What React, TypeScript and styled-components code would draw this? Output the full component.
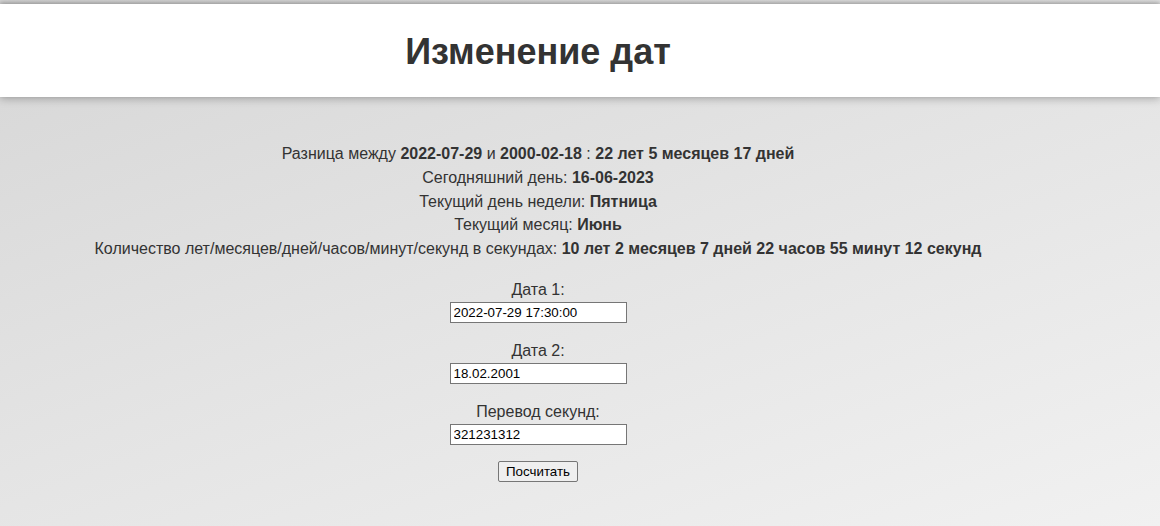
import React from "react";
import styled, { createGlobalStyle } from "styled-components";

const Global = createGlobalStyle`
  html, body { margin: 0; padding: 0; }
  body {
    min-height: 526px;
    background: linear-gradient(160deg, #d6d6d6 0%, #e4e4e4 50%, #f1f1f1 100%);
    font-family: "Liberation Sans", Arial, sans-serif;
    color: #333;
    overflow: hidden;
  }
`;

const Page = styled.div`
  width: 1076px;
  padding-top: 4px;
`;

const Header = styled.header`
  width: 1160px;
  height: 93px;
  background: #fff;
  box-shadow: 0 2px 8px rgba(0, 0, 0, 0.25), 0 -2px 4px rgba(0, 0, 0, 0.2);
  display: flex;
  align-items: center;
`;

const Title = styled.h1`
  width: 1076px;
  margin: 0;
  text-align: center;
  font-size: 36px;
  font-weight: bold;
  color: #333;
  line-height: 1;
  padding-top: 2px;
`;

const Info = styled.div`
  margin-top: 45px;
  text-align: center;
  font-size: 16px;
  line-height: 23.75px;
`;

const Line = styled.div``;

const B = styled.b`
  font-weight: bold;
`;

const Form = styled.form`
  margin-top: 17px;
  display: flex;
  flex-direction: column;
  align-items: center;
`;

const Field = styled.div`
  display: flex;
  flex-direction: column;
  align-items: center;
  margin-bottom: 16px;
`;

const Label = styled.label`
  font-size: 16px;
  line-height: 24px;
`;

const Input = styled.input`
  box-sizing: border-box;
  width: 177px;
  height: 21px;
  margin: 0;
  padding: 1px 3px;
  border: 1px solid #767676;
  background: #fff;
  font-family: "Liberation Sans", Arial, sans-serif;
  font-size: 13.33px;
  color: #000;
  outline: none;
`;

const Button = styled.button`
  box-sizing: border-box;
  width: 80px;
  height: 21px;
  padding: 1px 6px;
  border: 1px solid #767676;
  border-radius: 2px;
  background: #efefef;
  font-family: "Liberation Sans", Arial, sans-serif;
  font-size: 13.33px;
  color: #000;
`;

export default function App() {
  return (
    <Page>
      <Global />
      <Header>
        <Title>Изменение дат</Title>
      </Header>
      <Info>
        <Line>
          Разница между <B>2022-07-29</B> и <B>2000-02-18</B> : <B>22 лет 5 месяцев 17 дней</B>
        </Line>
        <Line>
          Сегодняшний день: <B>16-06-2023</B>
        </Line>
        <Line>
          Текущий день недели: <B>Пятница</B>
        </Line>
        <Line>
          Текущий месяц: <B>Июнь</B>
        </Line>
        <Line>
          Количество лет/месяцев/дней/часов/минут/секунд в секундах:{" "}
          <B>10 лет 2 месяцев 7 дней 22 часов 55 минут 12 секунд</B>
        </Line>
      </Info>
      <Form onSubmit={(e) => e.preventDefault()}>
        <Field>
          <Label>Дата 1:</Label>
          <Input defaultValue="2022-07-29 17:30:00" />
        </Field>
        <Field>
          <Label>Дата 2:</Label>
          <Input defaultValue="18.02.2001" />
        </Field>
        <Field>
          <Label>Перевод секунд:</Label>
          <Input defaultValue="321231312" />
        </Field>
        <Button type="submit">Посчитать</Button>
      </Form>
    </Page>
  );
}
